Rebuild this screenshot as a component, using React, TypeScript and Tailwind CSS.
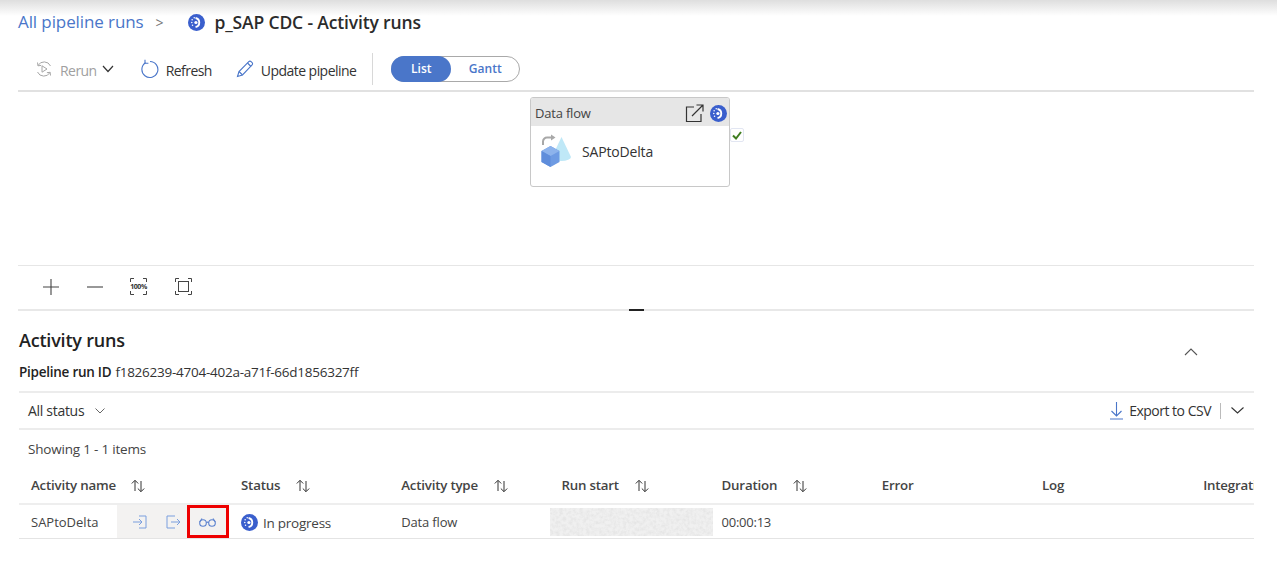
const font = "font-['Open_Sans','Noto_Sans',sans-serif]";

const InProgressIcon = ({ size = 18 }: { size?: number }) => (
  <svg width={size} height={size} viewBox="0 0 18 18">
    <circle cx="9" cy="9" r="9" fill="#3a5fcd" />
    <path d="M8 4.2a4.9 4.9 0 0 1 0 9.6" fill="none" stroke="#fff" strokeWidth="2" />
    <path d="M6.6 3.9v0M4.4 6v0M4 9v0M4.8 12v0" stroke="#fff" strokeWidth="1.6" strokeLinecap="round" />
    <circle cx="8.4" cy="9" r="1.7" fill="#fff" />
  </svg>
);

const SortIcon = () => (
  <svg width="16" height="14" viewBox="0 0 16 14" fill="none" stroke="#333" strokeWidth="1">
    <path d="M5 12V1.5M1.8 4.5 5 1.3l3.2 3.2" />
    <path d="M11 2v10.5M7.8 9.5l3.2 3.2 3.2-3.2" />
  </svg>
);

const columns = ["Status", "Activity type", "Run start", "Duration"];

export default function App() {
  return (
    <div className={`${font} w-[1277px] h-[576px] overflow-hidden bg-white text-[#323130]`}>
      {/* breadcrumb */}
      <div className="h-[44px] flex items-center pl-[18px] bg-[linear-gradient(to_bottom,#dedede_0px,#ffffff_16px)]">
        <span className="text-[17px] text-[#4a76c9] tracking-[-0.1px]">All pipeline runs</span>
        <span className="ml-[12px] text-[#777] text-[14px]">&gt;</span>
        <span className="ml-[24px] mr-[10px]"><InProgressIcon size={17} /></span>
        <span className="text-[17.5px] font-semibold text-[#2b2b2b] tracking-[-0.15px]">p_SAP CDC - Activity runs</span>
      </div>

      {/* toolbar */}
      <div className="ml-[18px] w-[1236px] h-[48px] pt-[4px] flex items-center border-b-2 border-[#e1e1e1] pl-[17px] text-[14px] tracking-[-0.55px]">
        <svg width="18" height="18" viewBox="0 0 18 18" fill="none" stroke="#a6a6a6" strokeWidth="1">
          <path d="M3 5.5A7 7 0 0 1 15.5 6M15 12.5A7 7 0 0 1 2.5 12" />
          <path d="M2.5 2.5 3 5.8l3.2-.4M15.5 15.5l-.4-3.2-3.2.4" />
          <path d="M7 5.8v6.4l5-3.2z" />
        </svg>
        <span className="ml-[7px] mt-[3px] text-[#a0a0a0]">Rerun</span>
        <svg className="ml-[5px]" width="12" height="8" viewBox="0 0 12 8" fill="none" stroke="#333" strokeWidth="1.2"><path d="m1 1 5 5.5L11 1" /></svg>
        <svg className="ml-[27px]" width="18" height="20" viewBox="0 0 18 20" fill="none" stroke="#4a76c9" strokeWidth="1.1">
          <path d="M4.5 3.8A8 8 0 1 0 9 2.5" />
          <path d="M4 .8v3.4h3.4" />
        </svg>
        <span className="ml-[7px] mt-[3px] text-[#333]">Refresh</span>
        <svg className="ml-[24px]" width="18" height="18" viewBox="0 0 18 18" fill="none" stroke="#4a76c9" strokeWidth="1.1">
          <path d="M1.5 16.5 3 11.5 12.8 1.6a1.6 1.6 0 0 1 2.3 0l1 1a1.6 1.6 0 0 1 0 2.3L6.5 15z" />
          <path d="m11.5 3 3.5 3.5M3 11.5 6.5 15" />
        </svg>
        <span className="ml-[7px] mt-[3px] text-[#333]">Update pipeline</span>
        <div className="ml-[16px] h-[32px] w-px bg-[#d8d8d8]" />
        <div className="ml-[18px] w-[129px] h-[26px] rounded-full border border-[#a9a9a9] flex items-center text-[12px] font-semibold tracking-normal">
          <span className="w-[60px] h-[26px] rounded-full bg-[#4a76c9] text-white flex items-center justify-center -ml-px">List</span>
          <span className="flex-1 text-center text-[#4a76c9]">Gantt</span>
        </div>
      </div>

      {/* canvas */}
      <div className="relative ml-[18px] w-[1236px] h-[174px] border-b border-[#e6e6e6]">
        <div className="absolute left-[512px] top-[5px] w-[200px] h-[90px] rounded-[3px] border border-[#c8c8c8] bg-white overflow-hidden">
          <div className="h-[28px] pt-[3px] bg-[#e6e6e6] flex items-center pl-[4px] pr-[2px] text-[13px] tracking-[-0.2px] text-[#444]">
            <span className="flex-1">Data flow</span>
            <svg className="mr-[6px]" width="19" height="19" viewBox="0 0 19 19" fill="none" stroke="#333" strokeWidth="1.2">
              <path d="M9 3H1.5v14.5H16V10" />
              <path d="M7 12 18 1M11.5 1H18v6.5" />
            </svg>
            <InProgressIcon size={17} />
          </div>
          <div className="flex items-center h-[50px] pl-[9px]">
            <svg width="33" height="36" viewBox="0 0 33 36">
              <path d="M21.5 4 31 24a9.500 4 0 0 1-19 0z" fill="#bfe8f7" />
              <path d="M1.500 18 10.500 13l9 5v11l-9 5-9-5z" fill="#6e9be3" />
              <path d="M1.500 18l9 5 9-5-9-5z" fill="#8db3ec" />
              <path d="M10.500 23v11l-9-5V18z" fill="#5f8ddb" />
              <path d="M3 12V8.500a4 4 0 0 1 4-4h6" fill="none" stroke="#a8a8a8" strokeWidth="2" />
              <path d="m11 1.500 4.500 3-4.500 3z" fill="#a8a8a8" />
            </svg>
            <span className="ml-[9px] text-[14px] tracking-[-0.17px] text-[#333]">SAPtoDelta</span>
          </div>
        </div>
        <div className="absolute left-[712px] top-[36px] w-[14px] h-[14px] bg-white border border-[#e2e6f2] rounded-[2px] flex items-center justify-center">
          <svg width="10" height="9" viewBox="0 0 10 9" fill="none" stroke="#3f7d20" strokeWidth="2"><path d="m1 4.500 3 3L9 1" /></svg>
        </div>
      </div>

      {/* zoom controls */}
      <div className="relative ml-[18px] w-[1236px] h-[45px] pb-[2px] border-b-2 border-[#e8e8e8] flex items-center pl-[25px] gap-[27px] text-[#444]">
        <svg width="16" height="16" viewBox="0 0 16 16" stroke="#444" strokeWidth="1.1"><path d="M8 0v16M0 8h16" /></svg>
        <svg className="ml-[1px]" width="16" height="16" viewBox="0 0 16 16" stroke="#444" strokeWidth="1.1"><path d="M0 8h16" /></svg>
        <div className="relative w-[17px] h-[17px] flex items-center justify-center">
          <svg className="absolute inset-0" width="17" height="17" viewBox="0 0 17 17" fill="none" stroke="#444"><path d="M.5 4V.5H4M13 .5h3.500V4M.5 13v3.500H4M13 16.500h3.500V13" /></svg>
          <span className="text-[7px] font-bold leading-none tracking-[-0.4px] text-[#333]">100%</span>
        </div>
        <svg className="ml-[1px]" width="17" height="17" viewBox="0 0 17 17" fill="none" stroke="#444"><path d="M.5 4V.5H4M13 .5h3.500V4M.5 13v3.500H4M13 16.500h3.500V13" /><rect x="3.500" y="3.500" width="10" height="10" /></svg>
        <div className="absolute left-[611px] bottom-[-2px] w-[15px] h-[2px] bg-[#222]" />
      </div>

      {/* activity runs */}
      <div className="mx-[19px]">
        <div className="relative pt-[16px] h-[80px]">
          <h2 className="text-[18px] leading-[26px] font-semibold text-[#222] tracking-[-0.2px]">Activity runs</h2>
          <div className="mt-[10px] flex items-center text-[13.5px] leading-[18px] tracking-[-0.25px]">
            <span className="font-semibold text-[#222]">Pipeline run ID</span>
            <span className="ml-[4px] text-[#333]">f1826239-4704-402a-a71f-66d1856327ff</span>
          </div>
          <svg className="absolute right-[60px] top-[37px]" width="14" height="8" viewBox="0 0 14 8" fill="none" stroke="#555" strokeWidth="1.1"><path d="m1 7 6-6 6 6" /></svg>
        </div>

        <div className="w-[1235px] h-[39px] border-y-2 border-[#ececec] flex items-center pl-[9px] text-[14px] tracking-[-0.3px] text-[#333]">
          <span>All status</span>
          <svg className="ml-[11px]" width="10" height="6" viewBox="0 0 10 6" fill="none" stroke="#666"><path d="m.5.5 4.500 4.500L9.500.5" /></svg>
          <svg className="ml-auto" width="13" height="18" viewBox="0 0 13 18" fill="none" stroke="#4a76c9" strokeWidth="1.1"><path d="M6.500 0v14M1.500 9l5 5 5-5M0 17h13" /></svg>
          <span className="ml-[6px] tracking-[-0.5px]">Export to CSV</span>
          <div className="ml-[9px] w-px h-[16px] bg-[#bbb]" />
          <svg className="ml-[10px] mr-[10px]" width="13" height="7" viewBox="0 0 13 7" fill="none" stroke="#333" strokeWidth="1.1"><path d="m.5.5 6 5.500 6-5.500" /></svg>
        </div>

        <div className="h-[37px] pt-[1px] flex items-center pl-[9px] text-[13.5px] tracking-[-0.2px] text-[#444]">Showing 1 - 1 items</div>

        {/* table */}
        <div className="w-[1235px] overflow-hidden">
          <div className="h-[38px] pt-[1px] border-b-2 border-[#eeeeee] grid grid-cols-[210px_repeat(7,160.2px)] items-center text-[13.3px] font-semibold tracking-[-0.2px] text-[#444] whitespace-nowrap">
            <div className="pl-[12px] flex items-center">Activity name<span className="ml-[14px]"><SortIcon /></span></div>
            {columns.map((c) => (
              <div key={c} className="pl-[12px] flex items-center">{c}<span className="ml-[15px]"><SortIcon /></span></div>
            ))}
            <div className="pl-[12px]">Error</div>
            <div className="pl-[12px]">Log</div>
            <div className="pl-[13px]">Integration runtime</div>
          </div>
          <div className="h-[34px] border-b border-[#e4e4e4] grid grid-cols-[210px_repeat(6,160.2px)] items-center text-[13px] tracking-[-0.25px] text-[#444] whitespace-nowrap">
            <div className="flex items-center h-[33px]">
              <span className="pl-[12px] w-[98px] pt-[3px] tracking-normal">SAPtoDelta</span>
              <div className="w-[112px] h-[33px] bg-[#f3f2f1] flex items-center">
                <svg className="ml-[16px]" width="14" height="14" viewBox="0 0 14 14" fill="none" stroke="#7b9fde"><path d="M0 7h9M6 4l3 3-3 3M6 1h7v12H6" /></svg>
                <svg className="ml-[19px]" width="14" height="14" viewBox="0 0 14 14" fill="none" stroke="#7b9fde"><path d="M5 7h9M11 4l3 3-3 3M9 1H1v12h8" /></svg>
                <div className="ml-[7px] w-[42px] h-[33px] border-[3px] border-[#ee0000] flex items-center justify-center pr-[2px]">
                  <svg width="17" height="10" viewBox="0 0 17 10" fill="none" stroke="#5b82cf" strokeWidth="1.1">
                    <circle cx="4" cy="6" r="3.300" /><circle cx="13" cy="6" r="3.300" />
                    <path d="M7.300 5.500c1-.7 1.400-.7 2.400 0M.7 5 3 1.500M16.300 5 14 1.500" />
                  </svg>
                </div>
              </div>
            </div>
            <div className="pl-[12px] pt-[1px] flex items-center text-[13.5px]"><InProgressIcon size={17} /><span className="ml-[5px] pt-[2px]">In progress</span></div>
            <div className="pl-[12px] pt-[3px] tracking-[-0.15px]">Data flow</div>
            <div className="h-[28px] w-[163px] ml-[1px] overflow-hidden bg-[#e2e2e2]">
              <svg width="163" height="28">
                <filter id="noise" x="0" y="0" width="100%" height="100%">
                  <feTurbulence type="fractalNoise" baseFrequency="0.3" numOctaves="3" seed="4" />
                  <feColorMatrix type="matrix" values="0 0 0 0 0.78 0 0 0 0 0.78 0 0 0 0 0.78 2 0 0 0 -0.7" />
                  <feGaussianBlur stdDeviation="0.4" />
                </filter>
                <rect width="163" height="28" fill="#f0f0f0" />
                <rect width="163" height="28" fill="#000" filter="url(#noise)" />
              </svg>
            </div>
            <div className="pl-[12px] pt-[3px]">00:00:13</div>
          </div>
        </div>
      </div>
    </div>
  );
}
